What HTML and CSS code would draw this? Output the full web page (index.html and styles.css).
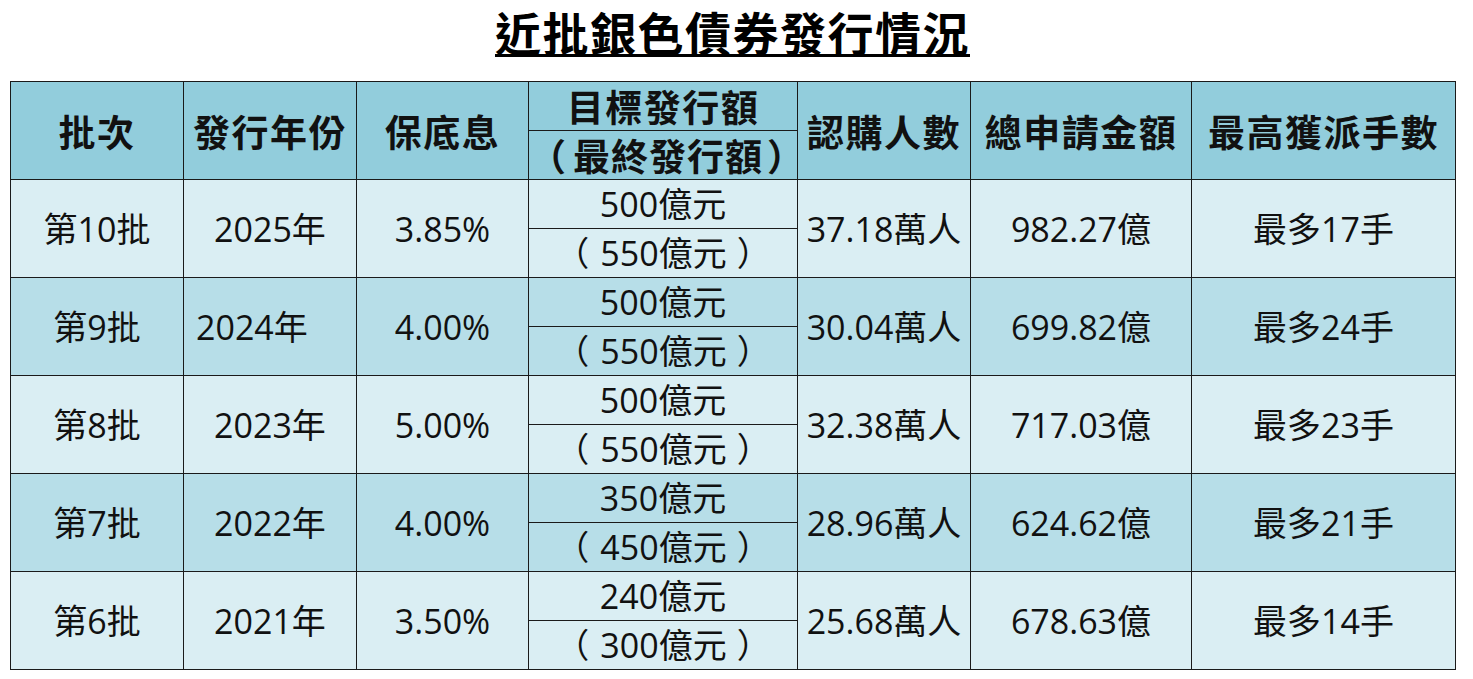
FILE: index.html
```html
<!DOCTYPE html>
<html lang="zh-Hant">
<head>
<meta charset="utf-8">
<title>近批銀色債券發行情況</title>
<link rel="stylesheet" href="styles.css">
</head>
<body>
<div class="page">
  <h1 class="title">近批銀色債券發行情況</h1>
  <table class="bonds">
    <colgroup>
      <col class="c1"><col class="c2"><col class="c3"><col class="c4"><col class="c5"><col class="c6"><col class="c7">
    </colgroup>
    <thead>
      <tr>
        <th rowspan="2">批次</th>
        <th rowspan="2">發行年份</th>
        <th rowspan="2">保底息</th>
        <th class="sub">目標發行額</th>
        <th rowspan="2">認購人數</th>
        <th rowspan="2">總申請金額</th>
        <th rowspan="2">最高獲派手數</th>
      </tr>
      <tr><th class="sub final"><span class="po">（</span>最終發行額<span class="pc">）</span></th></tr>
    </thead>
    <tbody>
      <tr class="light">
        <td rowspan="2">第10批</td><td rowspan="2">2025年</td><td rowspan="2">3.85%</td>
        <td class="sub">500億元</td>
        <td rowspan="2">37.18萬人</td><td rowspan="2">982.27億</td><td rowspan="2">最多17手</td>
      </tr>
      <tr class="light"><td class="sub"><span class="po">（</span>550億元<span class="pc">）</span></td></tr>

      <tr class="dark">
        <td rowspan="2">第9批</td><td rowspan="2" class="left">2024年</td><td rowspan="2">4.00%</td>
        <td class="sub">500億元</td>
        <td rowspan="2">30.04萬人</td><td rowspan="2">699.82億</td><td rowspan="2">最多24手</td>
      </tr>
      <tr class="dark"><td class="sub"><span class="po">（</span>550億元<span class="pc">）</span></td></tr>

      <tr class="light">
        <td rowspan="2">第8批</td><td rowspan="2">2023年</td><td rowspan="2">5.00%</td>
        <td class="sub">500億元</td>
        <td rowspan="2">32.38萬人</td><td rowspan="2">717.03億</td><td rowspan="2">最多23手</td>
      </tr>
      <tr class="light"><td class="sub"><span class="po">（</span>550億元<span class="pc">）</span></td></tr>

      <tr class="dark">
        <td rowspan="2">第7批</td><td rowspan="2">2022年</td><td rowspan="2">4.00%</td>
        <td class="sub">350億元</td>
        <td rowspan="2">28.96萬人</td><td rowspan="2">624.62億</td><td rowspan="2">最多21手</td>
      </tr>
      <tr class="dark"><td class="sub"><span class="po">（</span>450億元<span class="pc">）</span></td></tr>

      <tr class="light">
        <td rowspan="2">第6批</td><td rowspan="2">2021年</td><td rowspan="2">3.50%</td>
        <td class="sub">240億元</td>
        <td rowspan="2">25.68萬人</td><td rowspan="2">678.63億</td><td rowspan="2">最多14手</td>
      </tr>
      <tr class="light"><td class="sub"><span class="po">（</span>300億元<span class="pc">）</span></td></tr>
    </tbody>
  </table>
</div>
</body>
</html>
```

FILE: styles.css
```css
html, body {
  margin: 0;
  padding: 0;
  background: #ffffff;
}

.page {
  width: 1445px;
  margin-left: 10px;
  font-family: "Open Sans", "Noto Sans CJK TC", sans-serif;
  color: #111111;
}

.title {
  margin: 0;
  padding-top: 4px;
  height: 81px;
  box-sizing: border-box;
  text-align: center;
  font-family: "Noto Sans CJK TC", sans-serif;
  font-weight: 700;
  font-size: 46px;
  line-height: 54px;
  letter-spacing: 1.5px;
  text-decoration: underline;
  text-decoration-thickness: 3px;
  text-underline-offset: 3px;
  color: #000000;
}

.bonds {
  width: 1445px;
  table-layout: fixed;
  border-collapse: collapse;
  border: 1px solid #1a1a1a;
}

.c1 { width: 173px; }
.c2 { width: 173px; }
.c3 { width: 172px; }
.c4 { width: 269px; }
.c5 { width: 173px; }
.c6 { width: 221px; }
.c7 { width: 264px; }

.bonds th,
.bonds td {
  border: 1px solid #1a1a1a;
  padding: 0;
  text-align: center;
  vertical-align: middle;
  white-space: nowrap;
}

.bonds tr {
  height: 49px;
}

.bonds th {
  background: #92cddc;
  font-family: "Noto Sans CJK TC", sans-serif;
  font-weight: 700;
  font-size: 37px;
  letter-spacing: 1.5px;
  line-height: 46px;
  color: #111111;
}

.bonds th.final {
  letter-spacing: 1px;
}

.bonds td {
  font-size: 34px;
  line-height: 46px;
  font-weight: 400;
}

.po { margin-right: 11px; }
.pc { margin-left: 10px; }

.final .po { margin-right: 6px; }
.final .pc { margin-left: 4px; }

.bonds tr.light td { background: #daeef3; }
.bonds tr.dark td { background: #b7dee8; }

.bonds td.left {
  text-align: left;
  padding-left: 12px;
}
```
